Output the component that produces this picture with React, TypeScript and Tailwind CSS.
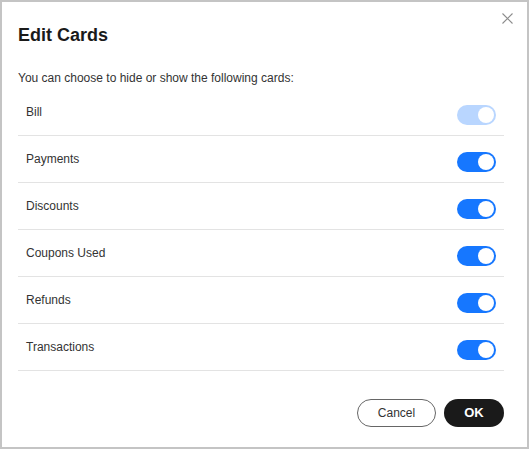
import React, { useState } from 'react';

interface CardOption {
  key: string;
  label: string;
  disabled?: boolean;
}

const CARDS: CardOption[] = [
  { key: 'bill', label: 'Bill', disabled: true },
  { key: 'payments', label: 'Payments' },
  { key: 'discounts', label: 'Discounts' },
  { key: 'coupons', label: 'Coupons Used' },
  { key: 'refunds', label: 'Refunds' },
  { key: 'transactions', label: 'Transactions' },
];

const Toggle: React.FC<{ on: boolean; disabled?: boolean; onChange: () => void }> = ({ on, disabled, onChange }) => (
  <button
    type="button"
    onClick={disabled ? undefined : onChange}
    className={`relative mt-[6px] h-[20px] w-[39px] shrink-0 rounded-full ${
      on ? (disabled ? 'bg-[#b9d6ff]' : 'bg-[#1677ff]') : 'bg-[#c8c8c8]'
    }`}
  >
    <span
      className={`absolute top-[2px] h-[16px] w-[16px] rounded-full bg-white ${on ? 'right-[2px]' : 'left-[2px]'}`}
    />
  </button>
);

export default function App() {
  const [state, setState] = useState<Record<string, boolean>>(() =>
    Object.fromEntries(CARDS.map((c) => [c.key, true]))
  );

  return (
    <div
      className="relative h-[449px] w-[529px] border-2 border-[#c4c4c4] bg-white pl-[16px] pr-[23px] pt-[21px] text-[#333]"
      style={{ fontFamily: '"Liberation Sans", Arial, sans-serif' }}
    >
      <button type="button" className="absolute right-[14px] top-[11px] h-[11px] w-[11px]">
        <svg viewBox="0 0 11 11" width="11" height="11" fill="none" stroke="#8c8c8c" strokeWidth="1.1">
          <path d="M0.5 0.5L10.5 10.5M10.5 0.5L0.5 10.5" />
        </svg>
      </button>

      <h1 className="text-[18px] font-bold leading-[24px] text-[#1a1a1a]">Edit Cards</h1>

      <p className="mt-[22px] text-[12px] leading-[18px]">You can choose to hide or show the following cards:</p>

      <ul className="mt-[2px]">
        {CARDS.map((card) => (
          <li
            key={card.key}
            className="flex h-[47px] items-center justify-between border-b border-[#e3e3e3] pl-[8px] pr-[8px]"
          >
            <span className="text-[12px] leading-[18px]">{card.label}</span>
            <Toggle
              on={state[card.key]}
              disabled={card.disabled}
              onChange={() => setState((s) => ({ ...s, [card.key]: !s[card.key] }))}
            />
          </li>
        ))}
      </ul>

      <div className="mt-[28px] flex justify-end gap-[8px]">
        <button
          type="button"
          className="h-[28px] w-[79px] rounded-full border border-[#666] text-[12px] text-[#333]"
        >
          Cancel
        </button>
        <button
          type="button"
          className="h-[28px] w-[60px] rounded-full bg-[#1a1a1a] text-[13px] font-bold text-white"
        >
          OK
        </button>
      </div>
    </div>
  );
}
